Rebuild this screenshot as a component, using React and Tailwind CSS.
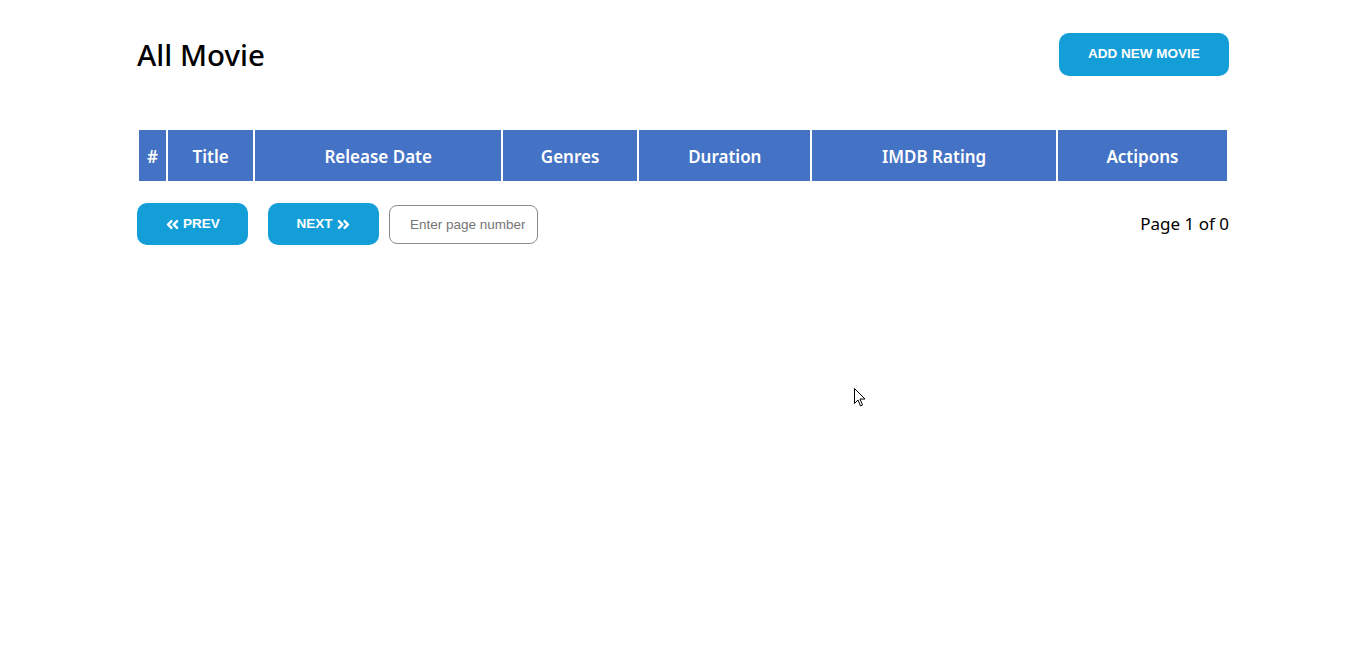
import { FaAngleDoubleLeft, FaAngleDoubleRight } from "react-icons/fa";

const columns = [
  { label: "#", w: "w-[27px]" },
  { label: "Title", w: "w-[86px]" },
  { label: "Release Date", w: "w-[247px]" },
  { label: "Genres", w: "w-[135px]" },
  { label: "Duration", w: "w-[172px]" },
  { label: "IMDB Rating", w: "w-[245px]" },
  { label: "Actipons", w: "w-[170px]" },
];

export default function App() {
  return (
    <div
      className="relative min-h-[665px] bg-white text-black"
      style={{ fontFamily: '"Noto Sans", sans-serif' }}
    >
      <div className="mx-auto w-[1092px] pt-[33px]">
        <div className="flex items-center justify-between">
          <h1 className="text-[29.5px] font-medium leading-[43px]">All Movie</h1>
          <button
            className="h-[43px] w-[170px] rounded-[10px] bg-[#139ed8] text-[13.5px] font-bold text-white"
            style={{ fontFamily: '"Liberation Sans", Arial, sans-serif' }}
          >
            ADD NEW MOVIE
          </button>
        </div>

        <table className="mt-[52px] border-separate border-spacing-[2px] table-fixed">
          <thead>
            <tr>
              {columns.map((c) => (
                <th
                  key={c.label}
                  className={`${c.w} h-[51px] bg-[#4472c4] p-0 pt-[3px] text-center text-[17px] font-semibold text-white`}
                >
                  {c.label}
                </th>
              ))}
            </tr>
          </thead>
        </table>

        <div className="mt-[20px] flex items-center">
          <button
            className="flex h-[42px] w-[111px] items-center justify-center gap-[3px] rounded-[10px] bg-[#139ed8] text-[13.5px] font-bold text-white"
            style={{ fontFamily: '"Liberation Sans", Arial, sans-serif' }}
          >
            <FaAngleDoubleLeft className="text-[15px]" /> PREV
          </button>
          <button
            className="ml-[20px] flex h-[42px] w-[111px] items-center justify-center gap-[3px] rounded-[10px] bg-[#139ed8] text-[13.5px] font-bold text-white"
            style={{ fontFamily: '"Liberation Sans", Arial, sans-serif' }}
          >
            NEXT <FaAngleDoubleRight className="text-[15px]" />
          </button>
          <input
            placeholder="Enter page number"
            className="ml-[10px] h-[39px] w-[149px] rounded-[8px] border border-[#8a8a8a] pl-[20px] pr-[12px] text-[13.5px] placeholder:text-[#757575] outline-none"
            style={{ fontFamily: '"Liberation Sans", Arial, sans-serif' }}
          />
          <div className="ml-auto text-[17px]">Page 1 of 0</div>
        </div>
      </div>

      <svg
        className="absolute left-[854px] top-[388px]"
        width="13"
        height="20"
        viewBox="0 0 13 20"
      >
        <path
          d="M0.5 0.5 L0.5 15.5 L4 12 L6.5 18 L8.5 17 L6 11 L11 11 Z"
          fill="white"
          stroke="black"
          strokeWidth="1"
        />
      </svg>
    </div>
  );
}
